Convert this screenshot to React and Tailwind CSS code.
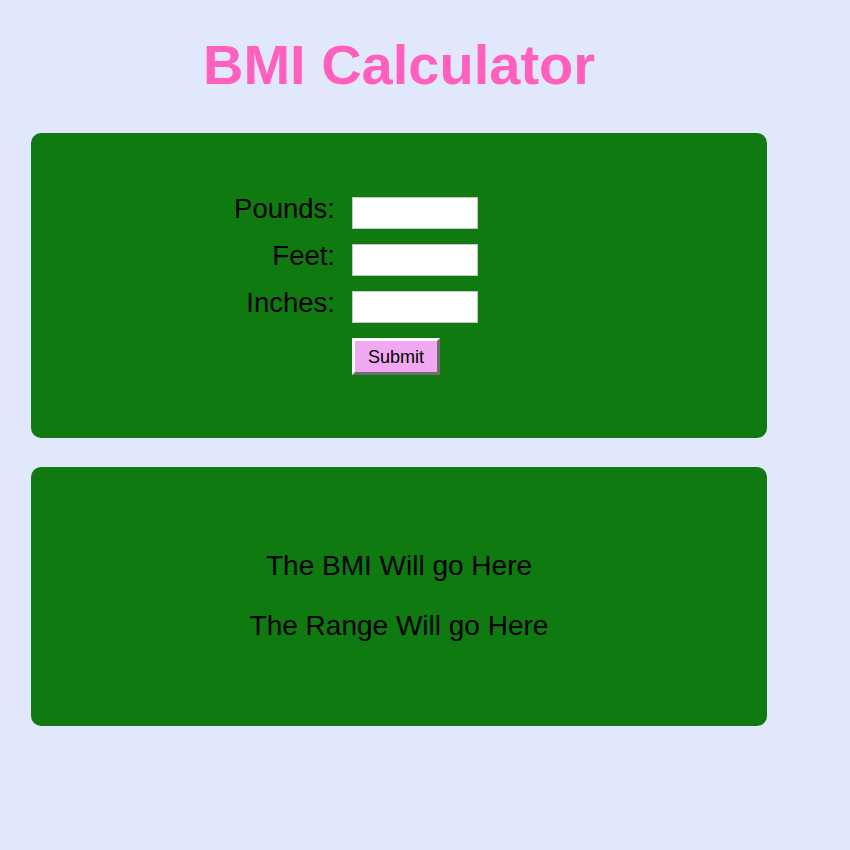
export default function App() {
  const font = { fontFamily: '"Liberation Sans", Arial, Helvetica, sans-serif' };
  return (
    <div className="w-full h-[850px] bg-[#e1e8fb] text-black" style={font}>
      <div className="ml-[31px] w-[736px] pt-[37px]">
        <h1 className="text-center text-[56px] leading-[56px] font-bold text-[#ff5fbd]">BMI Calculator</h1>
        <div className="mt-[40px] h-[305px] rounded-[10px] bg-[#0f7a10] pt-[64px] pl-[184px]">
          <form className="grid grid-cols-[120px_auto] gap-x-[17px] gap-y-[15px] items-start" onSubmit={(e) => e.preventDefault()}>
            <label className="text-right text-[27.5px] leading-[24px]">Pounds:</label>
            <input className="w-[126px] h-[32px] bg-white border border-[#c4c4c4] outline-none" />
            <label className="text-right text-[27.5px] leading-[24px]">Feet:</label>
            <input className="w-[126px] h-[32px] bg-white border border-[#c4c4c4] outline-none" />
            <label className="text-right text-[27.5px] leading-[24px]">Inches:</label>
            <input className="w-[126px] h-[32px] bg-white border border-[#c4c4c4] outline-none" />
            <div />
            <button
              type="submit"
              className="w-[88px] h-[37px] bg-[#f0a8f0] border-[3px] border-t-white border-l-white border-b-[#6e6e6e] border-r-[#6e6e6e] text-[18px] leading-none text-black"
            >
              Submit
            </button>
          </form>
        </div>
        <div className="mt-[29px] h-[259px] rounded-[10px] bg-[#0f7a10] pt-[83px] flex flex-col items-center gap-[28px]">
          <p className="text-[28px] leading-[32px]">The BMI Will go Here</p>
          <p className="text-[28px] leading-[32px]">The Range Will go Here</p>
        </div>
      </div>
    </div>
  );
}
